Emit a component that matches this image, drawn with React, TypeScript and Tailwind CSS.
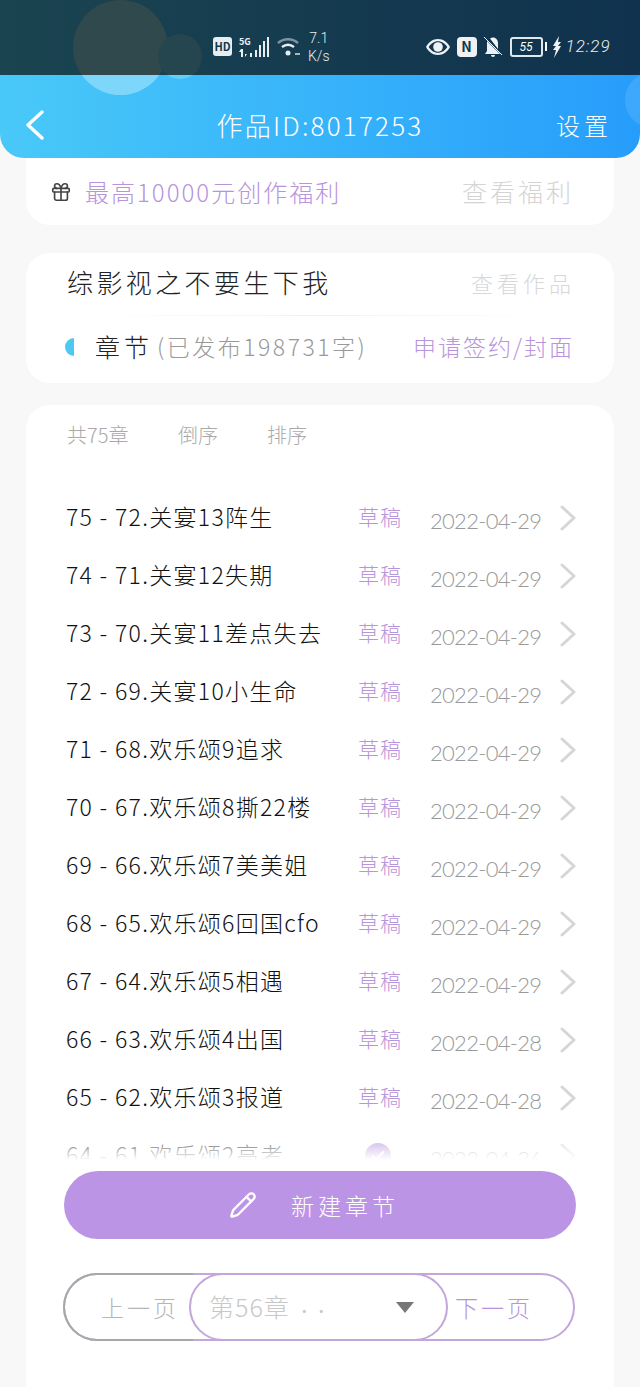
import { Gift, Pencil, Check } from "lucide-react";

const font = { fontFamily: '"Noto Sans CJK SC", "Noto Sans", sans-serif' };

const chapters = [
  { title: "75 - 72.关宴13阵生", date: "2022-04-29" },
  { title: "74 - 71.关宴12失期", date: "2022-04-29" },
  { title: "73 - 70.关宴11差点失去", date: "2022-04-29" },
  { title: "72 - 69.关宴10小生命", date: "2022-04-29" },
  { title: "71 - 68.欢乐颂9追求", date: "2022-04-29" },
  { title: "70 - 67.欢乐颂8撕22楼", date: "2022-04-29" },
  { title: "69 - 66.欢乐颂7美美姐", date: "2022-04-29" },
  { title: "68 - 65.欢乐颂6回国cfo", date: "2022-04-29" },
  { title: "67 - 64.欢乐颂5相遇", date: "2022-04-29" },
  { title: "66 - 63.欢乐颂4出国", date: "2022-04-28" },
  { title: "65 - 62.欢乐颂3报道", date: "2022-04-28" },
];

const RowArrow = () => (
  <svg width="16" height="26" viewBox="0 0 16 26" fill="none" stroke="#d6d6d6" strokeWidth="3" strokeLinecap="round" strokeLinejoin="round">
    <path d="M2 2l12 11L2 24" />
  </svg>
);

const StatusBar = () => (
  <div className="relative flex h-[75px] items-center overflow-hidden bg-gradient-to-r from-[#1b4450] to-[#10324e] pt-[18px] text-white">
    <div className="absolute left-[73px] top-0 h-[95px] w-[95px] rounded-full bg-[#2f494d]" />
    <div className="absolute left-[158px] top-[34px] h-[45px] w-[44px] rounded-full bg-[#25454f]" />
    <div className="relative ml-[213px] flex h-[19px] w-[19px] items-center justify-center rounded-[3px] bg-[#e8eef0] text-[11px] font-bold text-[#12384c]">
      HD
    </div>
    <svg width="33" height="22" viewBox="0 0 33 22" className="ml-[7px]" fill="#e8eef0">
      <text x="0" y="9" fontSize="9" fontWeight="700">5G</text>
      <path d="M2 13h2v8H2zM0 16l2-3v3zM6 14v7l2-3H6zM11 17h2v4h-2z" />
      <rect x="16" y="14" width="2" height="7" />
      <rect x="20" y="9" width="2" height="12" />
      <rect x="24" y="5" width="2" height="16" />
      <rect x="28" y="1" width="2" height="20" />
    </svg>
    <svg width="24" height="22" viewBox="0 0 24 22" className="ml-[5px]" fill="none" stroke="#e8eef0" strokeWidth="2.4">
      <path d="M1 7c6-5 14-5 20 0" stroke="#7c95a2" />
      <path d="M5 11c4-3 8-3 12 0" />
      <circle cx="11" cy="17" r="2.5" fill="#e8eef0" stroke="none" />
      <path d="M18 18h5" strokeWidth="1.4" />
    </svg>
    <div className="ml-[7px] flex flex-col items-center text-[14px] font-light leading-[18px] text-[#e8eef0]" style={{ fontFamily: "Roboto, sans-serif" }}>
      <span>7.1</span>
      <span>K/s</span>
    </div>
    <svg width="24" height="16" viewBox="0 0 24 16" className="ml-[96px]" fill="#eef2f4">
      <path d="M12 0C6.500 0 2.500 3.500 0 8c2.500 4.500 6.500 8 12 8s9.500-3.500 12-8c-2.500-4.500-6.500-8-12-8zm0 2.200c4 0 7.200 2.500 9.300 5.800-2.100 3.300-5.300 5.800-9.300 5.800S4.800 11.300 2.700 8C4.800 4.700 8 2.200 12 2.200z" />
      <circle cx="12" cy="8" r="4.800" />
    </svg>
    <div className="ml-[7px] flex h-[20px] w-[20px] items-center justify-center rounded-[4px] bg-[#eef2f4] text-[14px] font-bold text-[#12384c]">
      N
    </div>
    <svg width="20" height="20" viewBox="0 0 20 20" className="ml-[6px]" fill="#eef2f4">
      <path d="M4 4l13 13H2l2-3zM7 1.500C8 1 9 .5 10 .5c3 0 5 2.500 5 5.500v6zM8 18h4a2 2 0 0 1-4 0z" />
      <path d="M1 0l18 18" stroke="#eef2f4" strokeWidth="1" />
    </svg>
    <div className="ml-[7px] flex h-[20px] w-[33px] items-center justify-center rounded-[3px] border-2 border-[#dfe8ec] text-[12px] italic leading-none" style={{ fontFamily: "Roboto, sans-serif" }}>
      55
    </div>
    <div className="ml-[2px] h-[9px] w-[2px] bg-white" />
    <svg width="10" height="22" viewBox="0 0 10 22" className="ml-[5px]" fill="#eef2f4">
      <path d="M7 0L1 10h3L1 14h3l-2 8 7-12H6l3-4H6z" />
    </svg>
    <span className="ml-[4px] text-[17px] font-light italic tracking-[1px] text-[#e8eef0]" style={{ fontFamily: "Roboto, sans-serif" }}>
      12:29
    </span>
  </div>
);

export default function App() {
  return (
    <div className="h-[1387px] w-[640px] overflow-hidden bg-[#f8f8f8]" style={font}>
      <StatusBar />
      <div className="relative flex h-[83px] items-center justify-between overflow-hidden rounded-b-[24px] bg-gradient-to-r from-[#49c9f8] to-[#279dfb] pl-[26px] pr-[28px] pt-[16px] text-white">
        <div className="absolute left-[73px] -top-[75px] h-[95px] w-[95px] rounded-full bg-[#7fd6fb]" />
        <div className="absolute left-[158px] -top-[41px] h-[45px] w-[44px] rounded-full bg-[#63cefa]" />
        <div className="absolute left-[625px] -top-[3px] h-[56px] w-[56px] rounded-full bg-white/10" />
        <svg width="18" height="30" viewBox="0 0 18 30" fill="none" stroke="#fff" strokeWidth="3.400" strokeLinecap="round" strokeLinejoin="round" className="relative">
          <path d="M16 2L2 15l14 13" />
        </svg>
        <span className="relative ml-[40px] text-[26px] font-light tracking-[2.200px]">作品ID:8017253</span>
        <span className="relative text-[24px] font-light tracking-[4px]">设置</span>
      </div>

      <div className="flex flex-col px-[26px]">
        <div className="flex h-[67px] items-center justify-between rounded-b-[24px] bg-white pl-[24px] pr-[40px]">
          <div className="flex items-center gap-[13px]">
            <Gift className="h-[22px] w-[22px] text-[#444]" strokeWidth={1.8} />
            <span className="text-[24px] font-light tracking-[2px] text-[#b794dc]">最高10000元创作福利</span>
          </div>
          <span className="text-[25px] font-light tracking-[3px] text-[#d4d4d4]">查看福利</span>
        </div>

        <div className="mt-[28px] flex h-[130px] flex-col rounded-[24px] bg-white">
          <div className="flex h-[62px] items-end justify-between pb-[14px] pl-[41px] pr-[39px]">
            <span className="text-[26px] font-light tracking-[3.400px] text-[#222]">综影视之不要生下我</span>
            <span className="mb-[2px] text-[22px] font-light tracking-[4px] text-[#d8d8d8]">查看作品</span>
          </div>
          <div className="mx-[64px] h-px bg-gradient-to-r from-white via-[#f1f1f1] to-white" />
          <div className="flex flex-1 items-center justify-between pb-[6px] pl-[39px] pr-[40px]">
            <div className="flex items-center">
              <div className="h-[18px] w-[9px] rounded-l-full bg-[#4cc8f2]" />
              <span className="ml-[21px] text-[25px] font-light tracking-[4px] text-[#222]">章节</span>
              <span className="ml-[4px] text-[23px] font-light tracking-[2.500px] text-[#999]">(已发布198731字)</span>
            </div>
            <span className="text-[23px] font-light tracking-[2px] text-[#b794dc]">申请签约/封面</span>
          </div>
        </div>

        <div className="mt-[22px] flex h-[982px] flex-col rounded-t-[24px] bg-white">
          <div className="flex h-[60px] items-center pl-[41px] text-[20px] font-light text-[#aaa]">
            <span className="w-[111px]">共75章</span>
            <span className="w-[89px]">倒序</span>
            <span>排序</span>
          </div>
          <div className="relative mt-[24px] h-[671px] overflow-hidden">
            {chapters.map((c) => (
              <div key={c.title} className="flex h-[58px] items-center pl-[40px] pr-[38px]">
                <span className="mb-[3px] flex-1 whitespace-nowrap text-[23px] font-light tracking-[1.300px] text-[#111]">{c.title}</span>
                <span className="mb-[2px] w-[72px] text-[21px] font-light tracking-[1px] text-[#b794dc]">草稿</span>
                <span className="mt-[4px] w-[130px] text-[22px] font-light tracking-[-0.700px] text-[#999]" style={{ fontFamily: "Lato, sans-serif" }}>
                  {c.date}
                </span>
                <RowArrow />
              </div>
            ))}
            <div className="flex h-[58px] items-center pl-[40px] pr-[38px]">
              <span className="mb-[3px] flex-1 whitespace-nowrap text-[23px] font-light tracking-[1.300px] text-[#111]">64 - 61.欢乐颂2高考</span>
              <div className="mr-[39px] flex h-[26px] w-[26px] items-center justify-center rounded-full bg-[#b794dc]">
                <Check className="h-[16px] w-[16px] text-white" strokeWidth={3} />
              </div>
              <span className="mt-[4px] w-[130px] text-[22px] font-light tracking-[-0.700px] text-[#999]" style={{ fontFamily: "Lato, sans-serif" }}>
                2022-04-26
              </span>
              <RowArrow />
            </div>
            <div className="absolute inset-x-0 bottom-0 h-[32px] bg-gradient-to-b from-white/0 to-white" />
          </div>

          <button className="mx-[38px] mt-[11px] flex h-[68px] items-center justify-center rounded-full bg-[#bc94e6] pr-[12px] text-white">
            <Pencil className="h-[28px] w-[28px]" strokeWidth={2} />
            <span className="ml-[34px] text-[23px] font-light tracking-[4px]">新建章节</span>
          </button>

          <div className="relative ml-[37px] mr-[39px] mt-[34px] flex h-[68px] items-center justify-between rounded-full border-2 border-[#c2a6dc] pl-[36px] pr-[40px] text-[23px] font-light">
            <span className="tracking-[3px] text-[#b5b5b5]">上一页</span>
            <span className="tracking-[3px] text-[#b794dc]">下一页</span>
            {/* the grey half of the outline and the chapter picker lie over the pager */}
            <div className="absolute -left-[2px] -top-[2px] h-[68px] w-[130px] rounded-l-full border-2 border-r-0 border-[#a8a8a8]" />
            <div className="absolute left-[124px] -top-[2px] flex h-[68px] w-[259px] items-center justify-between rounded-full border-2 border-[#c2a6dc] bg-white pl-[18px] pr-[32px]">
              <span className="text-[25px] tracking-[1px] text-[#c8c8c8]">
                第56章 <span className="text-[16px]">··</span>
              </span>
              <div className="h-0 w-0 border-x-[9px] border-t-[11px] border-x-transparent border-t-[#777]" />
            </div>
          </div>
        </div>
      </div>
    </div>
  );
}
